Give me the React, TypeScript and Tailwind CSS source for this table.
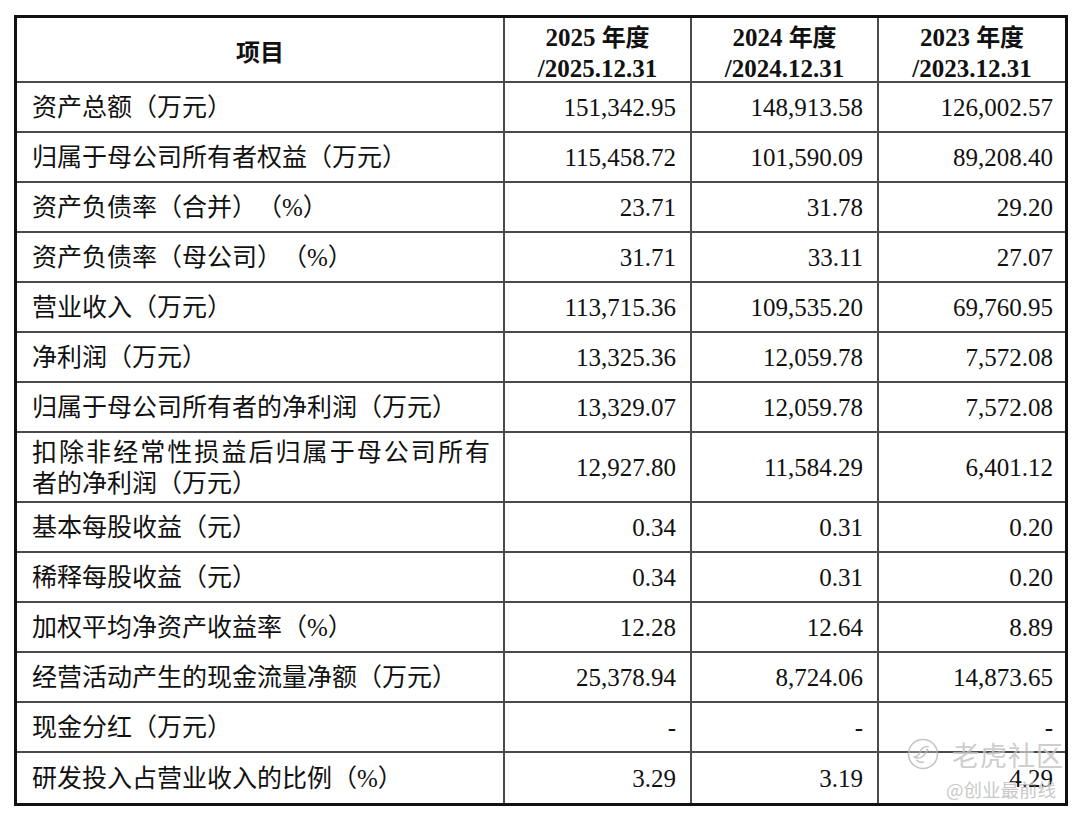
import React from "react";

const serif = "font-['Liberation_Serif','Noto_Sans_CJK_SC',serif]";

type Row = { label: React.ReactNode; v: [string, string, string]; tall?: boolean };

const rows: Row[] = [
  { label: "资产总额（万元）", v: ["151,342.95", "148,913.58", "126,002.57"] },
  { label: "归属于母公司所有者权益（万元）", v: ["115,458.72", "101,590.09", "89,208.40"] },
  { label: "资产负债率（合并）（%）", v: ["23.71", "31.78", "29.20"] },
  { label: "资产负债率（母公司）（%）", v: ["31.71", "33.11", "27.07"] },
  { label: "营业收入（万元）", v: ["113,715.36", "109,535.20", "69,760.95"] },
  { label: "净利润（万元）", v: ["13,325.36", "12,059.78", "7,572.08"] },
  { label: "归属于母公司所有者的净利润（万元）", v: ["13,329.07", "12,059.78", "7,572.08"] },
  {
    label: (
      <div className="leading-[31px]">
        <div className="w-[458px] [text-align-last:justify]">扣除非经常性损益后归属于母公司所有</div>
        <div>者的净利润（万元）</div>
      </div>
    ),
    v: ["12,927.80", "11,584.29", "6,401.12"],
    tall: true,
  },
  { label: "基本每股收益（元）", v: ["0.34", "0.31", "0.20"] },
  { label: "稀释每股收益（元）", v: ["0.34", "0.31", "0.20"] },
  { label: "加权平均净资产收益率（%）", v: ["12.28", "12.64", "8.89"] },
  { label: "经营活动产生的现金流量净额（万元）", v: ["25,378.94", "8,724.06", "14,873.65"] },
  { label: "现金分红（万元）", v: ["-", "-", "-"] },
  { label: "研发投入占营业收入的比例（%）", v: ["3.29", "3.19", "4.29"] },
];

const headers: [string, string][] = [
  ["2025", "/2025.12.31"],
  ["2024", "/2024.12.31"],
  ["2023", "/2023.12.31"],
];

export default function App() {
  return (
    <div className="w-[1080px] h-[817px] bg-white relative overflow-hidden [text-spacing-trim:space-all]">
      <div className="absolute left-0 top-0 w-full h-full pl-[14px] pt-[15px]">
        <div className={`w-[1054px] border-[3px] border-[#111] text-[#111] ${serif}`}>
          <div className="grid grid-cols-[488px_187px_187px_186px]">
            {/* header */}
            <div className="h-[65px] border-r-2 border-b-2 border-[#4a4a4a] flex items-center justify-center pt-[2px] text-[24px] font-bold font-['Noto_Sans_CJK_SC',sans-serif]">
              项目
            </div>
            {headers.map(([y, d], i) => (
              <div
                key={y}
                className={`h-[65px] border-b-2 border-[#4a4a4a] ${i < 2 ? "border-r-2" : ""} flex flex-col items-center justify-center pt-[4px] font-bold text-[25px] leading-[31px]`}
              >
                <div>
                  {y} <span className="font-['Noto_Sans_CJK_SC',sans-serif] text-[24px]">年度</span>
                </div>
                <div>{d}</div>
              </div>
            ))}
            {rows.map((r, ri) => {
              const last = ri === rows.length - 1;
              const h = r.tall ? "h-[70px]" : "h-[50px]";
              const bb = last ? "" : "border-b-2";
              return (
                <React.Fragment key={ri}>
                  <div
                    className={`${h} ${bb} border-r-2 border-[#4a4a4a] flex items-center pl-[15px] pt-[2px] text-[25px]`}
                  >
                    {r.label}
                  </div>
                  {r.v.map((val, ci) => (
                    <div
                      key={ci}
                      className={`${h} ${bb} ${ci < 2 ? "border-r-2 pr-[14px]" : "pr-[12px]"} border-[#4a4a4a] flex items-center justify-end text-[25px] pt-[1px]`}
                    >
                      {val}
                    </div>
                  ))}
                </React.Fragment>
              );
            })}
          </div>
        </div>
      </div>

      {/* watermark */}
      <div className="absolute left-[906px] top-[737px] flex items-center gap-[12px] pointer-events-none opacity-80">
        <svg width="34" height="34" viewBox="0 0 34 34" fill="none">
          <circle cx="17" cy="17" r="14.5" stroke="#b8b8b8" strokeWidth="1.6" fill="rgba(255,255,255,0.35)" />
          <path
            d="M22 9.5c-4 0-7 2.5-8 5.5-1 3-3 4.5-5.5 5 2 1.5 5.5 1.5 8-0.5 2.5-2 3-5 5.5-6"
            stroke="#b8b8b8"
            strokeWidth="1.6"
            strokeLinecap="round"
            fill="none"
          />
          <path d="M11 23.5c1.5 1.5 4 2 6.5 1.5" stroke="#b8b8b8" strokeWidth="1.6" strokeLinecap="round" />
          <circle cx="21" cy="12.5" r="1" fill="#b8b8b8" />
        </svg>
        <div className="text-[27px] leading-none tracking-[1px] text-[#c2c2c2] font-['Noto_Sans_CJK_SC',sans-serif] [text-shadow:0_0_1px_#fff]">
          老虎社区
        </div>
      </div>
      <div className="absolute left-[946px] top-[780px] text-[18.5px] leading-none text-[#c4c4c4] opacity-90 font-['Noto_Sans_CJK_SC',sans-serif] pointer-events-none">
        @创业最前线
      </div>
    </div>
  );
}
